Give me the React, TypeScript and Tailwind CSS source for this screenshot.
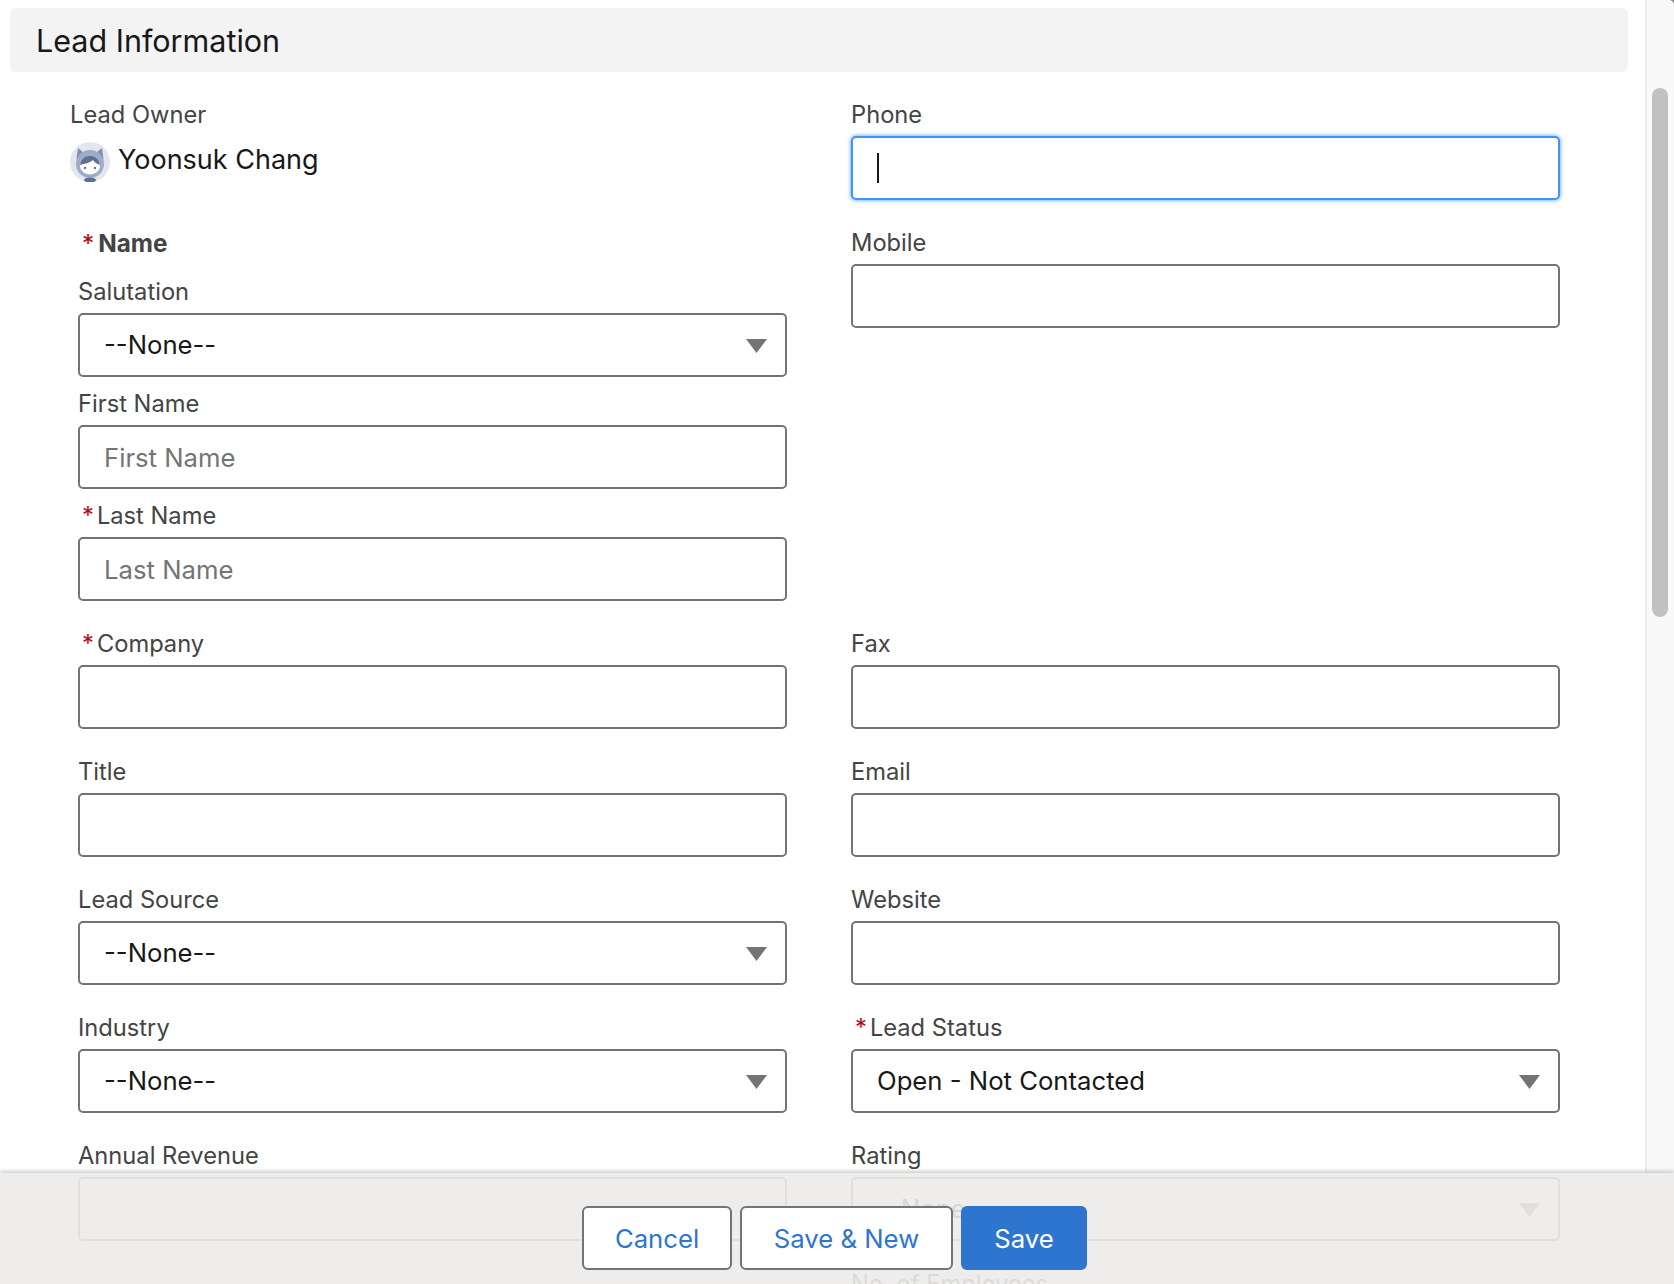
const inputBox = 'h-16 w-full rounded-[5px] border-2 border-[#747474] bg-white px-6 text-[25.7px] text-[#181818] outline-none placeholder:text-[#747474]'

function Label({ text, required }: { text: string; required?: boolean }) {
  return (
    <div className="mb-2 flex h-7 items-center pt-[2px] text-[23.7px] leading-7 text-[#444444]">
      {required && <span className="ml-1 mr-[3px] text-[#ba0517]">*</span>}
      {text}
    </div>
  )
}

function TextField({ label, required, placeholder }: { label: string; required?: boolean; placeholder?: string }) {
  return (
    <div>
      <Label text={label} required={required} />
      <input type="text" placeholder={placeholder} className={inputBox} />
    </div>
  )
}

function SelectField({ label, value, required }: { label: string; value: string; required?: boolean }) {
  return (
    <div>
      <Label text={label} required={required} />
      <div className="relative">
        <select defaultValue={value} className={`${inputBox} appearance-none`}>
          <option>{value}</option>
        </select>
        <svg viewBox="0 0 21 14" className="pointer-events-none absolute right-[20px] top-[26px] h-[14px] w-[21px]" aria-hidden="true">
          <path d="M0 0h21L10.5 14z" fill="#747474" />
        </svg>
      </div>
    </div>
  )
}

function Avatar() {
  return (
    <svg viewBox="0 0 40 40" className="h-10 w-10 shrink-0" aria-hidden="true">
      <circle cx="20" cy="20" r="20" fill="#e3e6ee" />
      <path d="M8 6l6 5h12l6-5 1.5 11H6.500z" fill="#7d8fb0" />
      <circle cx="20" cy="22" r="14" fill="#9dacc9" />
      <ellipse cx="20" cy="38" rx="6" ry="2.500" fill="#5f7093" />
      <ellipse cx="20" cy="24" rx="10" ry="8.500" fill="#ffffff" />
      <path d="M10 23c1-6 5-9 10-9s9 3 10 9c-3-1-6-3-7-5-2 2-8 4-13 5z" fill="#5f7093" />
      <circle cx="15" cy="26" r="1.200" fill="#5f7093" />
      <circle cx="25" cy="26" r="1.200" fill="#5f7093" />
    </svg>
  )
}

export default function App() {
  return (
    <div className="relative flex h-[1284px] w-full overflow-hidden bg-white font-['Inter',sans-serif]">
      <div className="min-w-0 flex-1">
        <div className="ml-[10px] mr-[17px] mt-2 flex h-16 items-center rounded-[6px] bg-[#f3f3f3] pl-[26px] pt-[1px] text-[30.5px] text-[#181818]">
          Lead Information
        </div>

        <div className="ml-[78px] mr-[85px] mt-7 grid grid-cols-2 gap-x-16 gap-y-7">
          <div className="-ml-2">
            <Label text="Lead Owner" />
            <div className="mt-[14px] flex items-center gap-2 text-[27px] text-[#181818]">
              <Avatar />
              <span className="-mt-1">Yoonsuk Chang</span>
            </div>
          </div>
          <div>
            <Label text="Phone" />
            <div className="flex h-16 w-full items-center rounded-[5px] border-2 border-[#3f96f5] bg-white px-6 shadow-[0_0_4px_#3f96f5]">
              <span className="h-[30px] w-[2px] bg-[#181818]" />
            </div>
          </div>

          <div>
            <div className="mb-[21px] flex h-7 items-center pt-[2px] text-[24.3px] font-bold text-[#444444]">
              <span className="ml-1 mr-[4px] font-normal text-[#ba0517]">*</span>
              Name
            </div>
            <div className="flex flex-col gap-3">
              <SelectField label="Salutation" value="--None--" />
              <TextField label="First Name" placeholder="First Name" />
              <TextField label="Last Name" placeholder="Last Name" required />
            </div>
          </div>
          <TextField label="Mobile" />

          <TextField label="Company" required />
          <TextField label="Fax" />
          <TextField label="Title" />
          <TextField label="Email" />
          <SelectField label="Lead Source" value="--None--" />
          <TextField label="Website" />
          <SelectField label="Industry" value="--None--" />
          <SelectField label="Lead Status" value="Open - Not Contacted" required />
          <TextField label="Annual Revenue" />
          <SelectField label="Rating" value="--None--" />
          <div />
          <TextField label="No. of Employees" />
        </div>
      </div>

      {/* scrollbar, the grey behind it only shows at the rounded corner */}
      <div className="w-[29px] shrink-0 bg-[#8a8a8a]">
        <div className="h-full rounded-tr-[5px] border-l-2 border-[#ececec] bg-[#f9f9f9] pl-[5px] pt-[88px]">
          <div className="h-[529px] w-4 rounded-full bg-[#c1c1c1]" />
        </div>
      </div>

      {/* footer floats over the form */}
      <div className="absolute inset-x-0 bottom-0 flex h-[111px] items-start justify-center gap-2 bg-[#ecebe9]/90 pr-[5px] pt-[33px] text-[25.7px] shadow-[0_-2px_4px_rgba(0,0,0,0.2)]">
        <button type="button" className="h-16 w-[150px] rounded-[6px] border-2 border-[#747474] bg-white pt-[2px] text-[#2e75cf]">Cancel</button>
        <button type="button" className="h-16 w-[213px] rounded-[6px] border-2 border-[#747474] bg-white pt-[2px] text-[#2e75cf]">Save &amp; New</button>
        <button type="button" className="h-16 w-[126px] rounded-[6px] bg-[#2e75cf] pt-[2px] text-white">Save</button>
      </div>
    </div>
  )
}
